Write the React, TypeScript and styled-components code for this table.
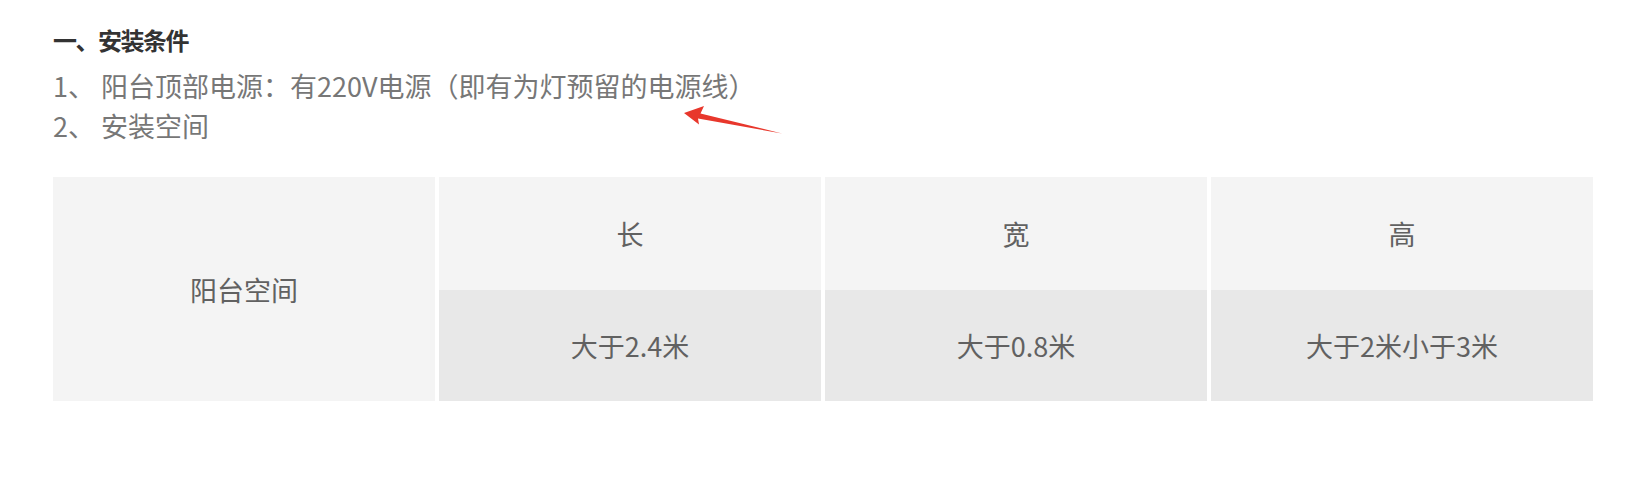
import styled, { createGlobalStyle } from "styled-components";

const GlobalStyle = createGlobalStyle`
  body {
    margin: 0;
    background: #ffffff;
    font-family: "Noto Sans CJK SC", "Noto Sans", sans-serif;
  }
`;

const conditions = [
  { no: "1、", text: "阳台顶部电源：有220V电源（即有为灯预留的电源线）" },
  { no: "2、", text: "安装空间" },
];

const sizes = [
  { label: "长", value: "大于2.4米" },
  { label: "宽", value: "大于0.8米" },
  { label: "高", value: "大于2米小于3米" },
];

const App: React.FC = () => {
  return (
    <Page>
      <GlobalStyle />
      <Title>一、安装条件</Title>
      <List>
        {conditions.map((item, i) => (
          <Item key={item.no}>
            {item.no} {item.text}
            {i === 0 && (
              <Arrow viewBox="0 0 105 32" aria-hidden="true">
                <polygon points="4,8 24,1 20.5,8.5 102,28.5 18,13.5 19,19.5" fill="#e8372c" />
              </Arrow>
            )}
          </Item>
        ))}
      </List>
      <Table>
        <Cell $span>阳台空间</Cell>
        {sizes.map((s) => (
          <Cell key={s.label}>{s.label}</Cell>
        ))}
        {sizes.map((s) => (
          <Cell key={s.value} $dark>
            {s.value}
          </Cell>
        ))}
      </Table>
    </Page>
  );
};

export default App;

const Page = styled.div`
  padding: 23px 54px 0 53px;
`;

const Title = styled.h3`
  margin: 0;
  font-size: 24px;
  line-height: 34px;
  font-weight: 700;
  letter-spacing: -1.5px;
  color: #333333;
`;

const List = styled.ul`
  list-style: none;
  margin: 9px 0 0;
  padding: 0;
`;

const Item = styled.li`
  position: relative;
  font-size: 27px;
  line-height: 40px;
  color: #777777;
  white-space: pre;
`;

const Arrow = styled.svg`
  position: absolute;
  left: 627px;
  top: 39px;
  width: 105px;
  height: 32px;
`;

const Table = styled.div`
  display: grid;
  grid-template-columns: repeat(4, 1fr);
  grid-template-rows: 113px 111px;
  column-gap: 4px;
  margin-top: 31px;
`;

const Cell = styled.div<{ $span?: boolean; $dark?: boolean }>`
  display: flex;
  align-items: center;
  justify-content: center;
  grid-row: ${({ $span }) => ($span ? "span 2" : "auto")};
  background: ${({ $dark }) => ($dark ? "#e8e8e8" : "#f4f4f4")};
  font-size: 27px;
  color: #616161;
`;
